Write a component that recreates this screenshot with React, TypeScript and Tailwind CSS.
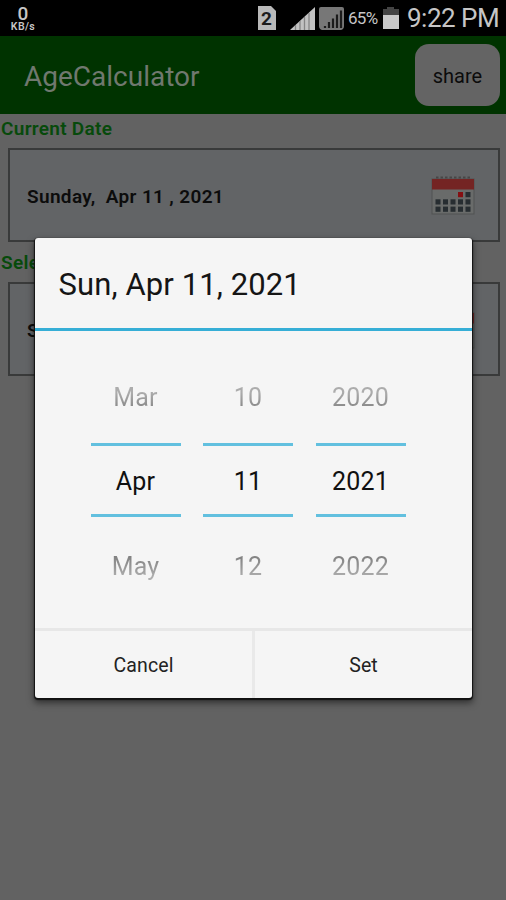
import { useState } from 'react';

const MONTHS = ['Jan', 'Feb', 'Mar', 'Apr', 'May', 'Jun', 'Jul', 'Aug', 'Sep', 'Oct', 'Nov', 'Dec'];
const WEEKDAYS = ['Sun', 'Mon', 'Tue', 'Wed', 'Thu', 'Fri', 'Sat'];

function StatusBar() {
  return (
    <div className="flex h-9 items-center bg-black text-[#c6c6c6]">
      <div className="ml-[10px] flex w-[26px] flex-col items-center pt-px">
        <span className="text-[19px] leading-[17px] font-medium">0</span>
        <span className="text-[10.500px] leading-[10px] font-semibold tracking-[0.4px]">KB/s</span>
      </div>

      <svg className="ml-auto" width="20" height="26" viewBox="0 0 20 26">
        <path d="M1 1h13l5 5v19H1z" fill="#b9b9b9" />
        <text x="9.500" y="19.500" textAnchor="middle" fontSize="19" fontWeight="bold" fill="#1c1c1c">
          2
        </text>
      </svg>

      {/* Signal of SIM 1 */}
      <svg className="ml-[13px]" width="26" height="25" viewBox="0 0 26 25">
        <path d="M0 24 25 1v23z" fill="#c2c2c2" />
        <path d="M5.500 19v5M10 15v9M14.500 11v13M19 7v17" stroke="#858585" strokeWidth="1.300" />
      </svg>

      {/* Signal of SIM 2 */}
      <svg className="ml-[2px]" width="27" height="25" viewBox="0 0 27 25">
        <path d="M3 1h21q2 0 2 2v17q0 3-3 4H4q-3-1-3-4V3q0-2 2-2z" fill="#777" />
        <path d="M7 20v2M11 16v6M15 12.500v9.500M19 8.500V22M23 4.500V22" stroke="#1b1b1b" strokeWidth="2.200" />
      </svg>

      <span className="ml-[3px] w-[31px] text-[17px] leading-none tracking-[-0.7px]">65%</span>

      <svg className="ml-[3px]" width="18" height="24" viewBox="0 0 18 24">
        <path d="M5 1h7v2h5v8H1V3h4z" fill="#444" />
        <path d="M1 9h16v14H1z" fill="#c9c9c9" />
      </svg>

      <span className="mr-[6px] ml-[7px] w-[93px] text-[26px] leading-none tracking-[-0.5px] whitespace-nowrap">
        9:22 PM
      </span>
    </div>
  );
}

function CalendarIcon() {
  // [column, row] of every day square
  const cells = [
    [3, 0], [4, 0],
    [0, 1], [1, 1], [2, 1], [3, 1], [4, 1],
    [0, 2], [1, 2], [2, 2], [3, 2], [4, 2],
  ];

  return (
    <svg width="46" height="42" viewBox="0 0 46 42">
      <rect x="2" y="5" width="42" height="35" fill="#696b6a" stroke="#505252" />
      <rect x="2" y="5" width="42" height="10.500" fill="#742423" />
      <path d="M6 3.500h36" stroke="#484646" strokeWidth="2" strokeDasharray="2.500 2" />
      {cells.map(([col, row]) => (
        <rect
          key={`${col}-${row}`}
          x={5.5 + col * 7.5}
          y={18 + row * 7.3}
          width="5"
          height="5.200"
          fill={col === 3 && row === 0 ? '#850f12' : '#272d31'}
        />
      ))}
    </svg>
  );
}

function DateField({ label, value }: { label: string; value: string }) {
  return (
    <div>
      <div className="flex h-[34px] items-start pt-[3px] pl-px text-[19px] leading-6 font-semibold tracking-[0.3px] text-[#074a0b]">
        {label}
      </div>
      <div className="mr-[6px] ml-2 flex h-[94px] items-center justify-between border-2 border-[#393a3a] bg-[#626466] pr-[22px] pl-[17px]">
        <span className="pt-[4px] text-[19px] font-semibold tracking-[0.35px] whitespace-pre text-[#0c0c0c]">
          {value}
        </span>
        <CalendarIcon />
      </div>
    </div>
  );
}

interface WheelProps {
  values: [string, string, string];
  onPrev: () => void;
  onNext: () => void;
}

function Wheel({ values, onPrev, onNext }: WheelProps) {
  return (
    <div className="flex w-[90px] flex-col text-[25px] leading-none tracking-[0.2px]">
      <button
        onClick={onPrev}
        className="h-[112px] bg-gradient-to-b from-[#acacac] from-55% to-[#858585] to-70% bg-clip-text pt-[21px] text-transparent"
      >
        {values[0]}
      </button>
      <div className="flex h-[74px] items-center justify-center border-y-[3px] border-[#62c0df] pt-[2px] text-[#101010]">
        {values[1]}
      </div>
      <button
        onClick={onNext}
        className="h-[111px] bg-gradient-to-b from-[#808080] from-35% to-[#b0b0b0] to-55% bg-clip-text pb-[13px] text-transparent"
      >
        {values[2]}
      </button>
    </div>
  );
}

function DatePickerDialog() {
  const [date, setDate] = useState(new Date(2021, 3, 11));

  const shift = (years: number, months: number, days: number) =>
    new Date(date.getFullYear() + years, date.getMonth() + months, date.getDate() + days);

  const month = (n: number) => MONTHS[(date.getMonth() + n + 12) % 12];
  const day = (n: number) => String(shift(0, 0, n).getDate());
  const year = (n: number) => String(date.getFullYear() + n);

  return (
    <div className="flex h-[460px] w-[437px] flex-col rounded-[3px] bg-[#f5f5f5] shadow-[0_1px_1px_1px_#111,0_4px_7px_1px_rgba(0,0,0,0.5)]">
      <div className="flex h-[93px] items-center border-b-[3px] border-[#36aed6] pt-[5px] pl-[23.500px] text-[31px] tracking-[0.1px] text-[#151515]">
        {`${WEEKDAYS[date.getDay()]}, ${month(0)} ${date.getDate()}, ${date.getFullYear()}`}
      </div>
      <div className="flex h-[297px] gap-[22.500px] pl-[55.500px]">
        <Wheel
          values={[month(-1), month(0), month(1)]}
          onPrev={() => setDate(shift(0, -1, 0))}
          onNext={() => setDate(shift(0, 1, 0))}
        />
        <Wheel
          values={[day(-1), day(0), day(1)]}
          onPrev={() => setDate(shift(0, 0, -1))}
          onNext={() => setDate(shift(0, 0, 1))}
        />
        <Wheel
          values={[year(-1), year(0), year(1)]}
          onPrev={() => setDate(shift(-1, 0, 0))}
          onNext={() => setDate(shift(1, 0, 0))}
        />
      </div>
      <div className="flex flex-1 border-t-[3px] border-[#e7e7e7] text-[19.500px] text-[#222]">
        <button className="w-[220px] border-r-[3px] border-[#e9e9e9] pt-[2px] tracking-[0.1px]">Cancel</button>
        <button className="flex-1 pt-[2px]">Set</button>
      </div>
    </div>
  );
}

export default function App() {
  return (
    <div className="relative h-[900px] w-[506px] overflow-hidden bg-[#626262] font-[Roboto,sans-serif]">
      <StatusBar />
      <header className="flex h-[78px] items-center justify-between bg-[#003300] pr-[6px] pl-6">
        <h1 className="pt-[4px] text-[28px] text-[#70786f]">AgeCalculator</h1>
        <button className="h-[62px] w-[85px] rounded-[14px] bg-[#646464] pt-px text-[20px] text-[#0c0c0c]">
          share
        </button>
      </header>
      <DateField label="Current Date" value="Sunday,  Apr 11 , 2021" />
      <div className="h-[6px]" />
      <DateField label="Select Date" value="Sunday,  Apr 11 , 2021" />

      <div className="absolute top-[238px] left-[35px]">
        <DatePickerDialog />
      </div>
    </div>
  );
}
